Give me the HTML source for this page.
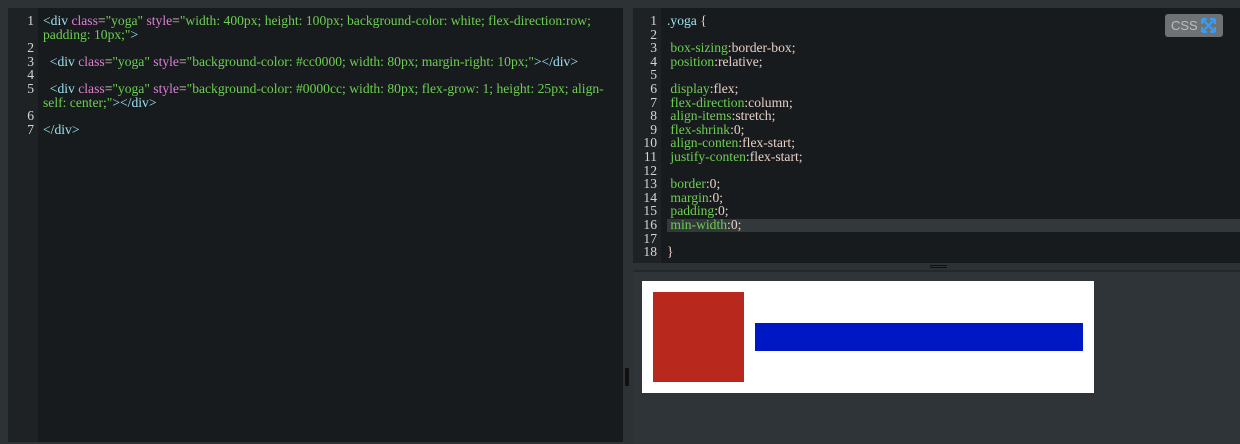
<!DOCTYPE html>
<html><head><style>
body{margin:0;width:1240px;height:442px;background:#2d3235;position:relative;overflow:hidden;font-family:"Liberation Serif",serif;font-size:13.6px;}
.ed{position:absolute;background:#181b1d;}
.gut{position:absolute;left:0;top:0;bottom:0;background:#1e2224;}
.code{position:absolute;line-height:13.6px;color:#6ccf52;}
.ln{position:absolute;line-height:13.6px;color:#d6d6d6;text-align:right;}
.t{color:#9be2ee}.a{color:#e07fd6}.s{color:#6ccf52}.p{color:#e6d0c6}.w{color:#e6d0c6}
.row{white-space:pre-wrap}
</style></head><body>
<div class="ed" style="left:8px;top:8px;width:615px;height:434px;">
 <div class="gut" style="width:30px"></div>
 <div class="ln" style="left:0;top:6px;width:26px;">1<br><br>2<br>3<br>4<br>5<br><br>6<br>7</div>
 <div class="code" style="left:35px;top:6px;width:565px;">
  <div class="row"><span class="t">&lt;div</span> <span class="a">class</span><span class="w">=</span>"yoga" <span class="a">style</span><span class="w">=</span>"width: 400px; height: 100px; background-color: white; flex-direction:row; padding: 10px;"<span class="t">&gt;</span></div>
  <div class="row"> </div>
  <div class="row">  <span class="t">&lt;div</span> <span class="a">class</span><span class="w">=</span>"yoga" <span class="a">style</span><span class="w">=</span>"background-color: #cc0000; width: 80px; margin-right: 10px;"<span class="t">&gt;&lt;/div&gt;</span></div>
  <div class="row"> </div>
  <div class="row">  <span class="t">&lt;div</span> <span class="a">class</span><span class="w">=</span>"yoga" <span class="a">style</span><span class="w">=</span>"background-color: #0000cc; width: 80px; flex-grow: 1; height: 25px; align-<br>self: center;"<span class="t">&gt;&lt;/div&gt;</span></div>
  <div class="row"> </div>
  <div class="row"><span class="t">&lt;/div&gt;</span></div>
 </div>
</div>
<div style="position:absolute;left:625px;top:368px;width:4px;height:18px;background:#111;"></div>
<div class="ed" style="left:633px;top:8px;width:607px;height:255px;">
 <div class="gut" style="width:28px"></div>
 <div style="position:absolute;left:34px;top:211px;width:573px;height:13px;background:#33383a"></div>
 <div class="ln" style="left:0;top:6px;width:24px;">1<br>2<br>3<br>4<br>5<br>6<br>7<br>8<br>9<br>10<br>11<br>12<br>13<br>14<br>15<br>16<br>17<br>18</div>
 <div class="code" style="left:34px;top:6px;color:#e6d0c6">
  <span class="t">.yoga</span> {<br><br>
  &nbsp;<span class="s">box-sizing</span>:border-box;<br>
  &nbsp;<span class="s">position</span>:relative;<br><br>
  &nbsp;<span class="s">display</span>:flex;<br>
  &nbsp;<span class="s">flex-direction</span>:column;<br>
  &nbsp;<span class="s">align-items</span>:stretch;<br>
  &nbsp;<span class="s">flex-shrink</span>:0;<br>
  &nbsp;<span class="s">align-conten</span>:flex-start;<br>
  &nbsp;<span class="s">justify-conten</span>:flex-start;<br><br>
  &nbsp;<span class="s">border</span>:0;<br>
  &nbsp;<span class="s">margin</span>:0;<br>
  &nbsp;<span class="s">padding</span>:0;<br>
  &nbsp;<span class="s">min-width</span>:0;<br><br>
  }
 </div>
 <div style="position:absolute;left:532px;top:6px;width:58px;height:23px;background:#6e7274;border-radius:3px;">
  <span style="position:absolute;left:6px;top:0;color:#b9bdbf;font-family:'Liberation Sans',sans-serif;font-size:13px;line-height:23px;">CSS</span>
  <svg style="position:absolute;left:36px;top:4px" width="15" height="15" viewBox="0 0 15 15" fill="none" stroke="#3a9cf0" stroke-width="2"><path d="M2 2l11 11M13 2L2 13"/><path d="M1 1h5M1 1v5M14 1h-5M14 1v5M1 14h5M1 14v-5M14 14h-5M14 14v-5" stroke-width="2.2"/></svg>
 </div>
</div>
<div style="position:absolute;left:930px;top:265px;width:17px;height:1px;background:#111"></div>
<div style="position:absolute;left:930px;top:267px;width:17px;height:1px;background:#111"></div>
<div style="position:absolute;left:633px;top:270px;width:607px;height:172px;background:#2e3437;border-top:2px solid #23282a;"></div>
<div style="position:absolute;left:642px;top:281px;width:452px;height:112px;background:#fff;"></div>
<div style="position:absolute;left:653px;top:292px;width:91px;height:90px;background:#b9281c;"></div>
<div style="position:absolute;left:755px;top:323px;width:328px;height:28px;background:#0018c4;"></div>
</body></html>
